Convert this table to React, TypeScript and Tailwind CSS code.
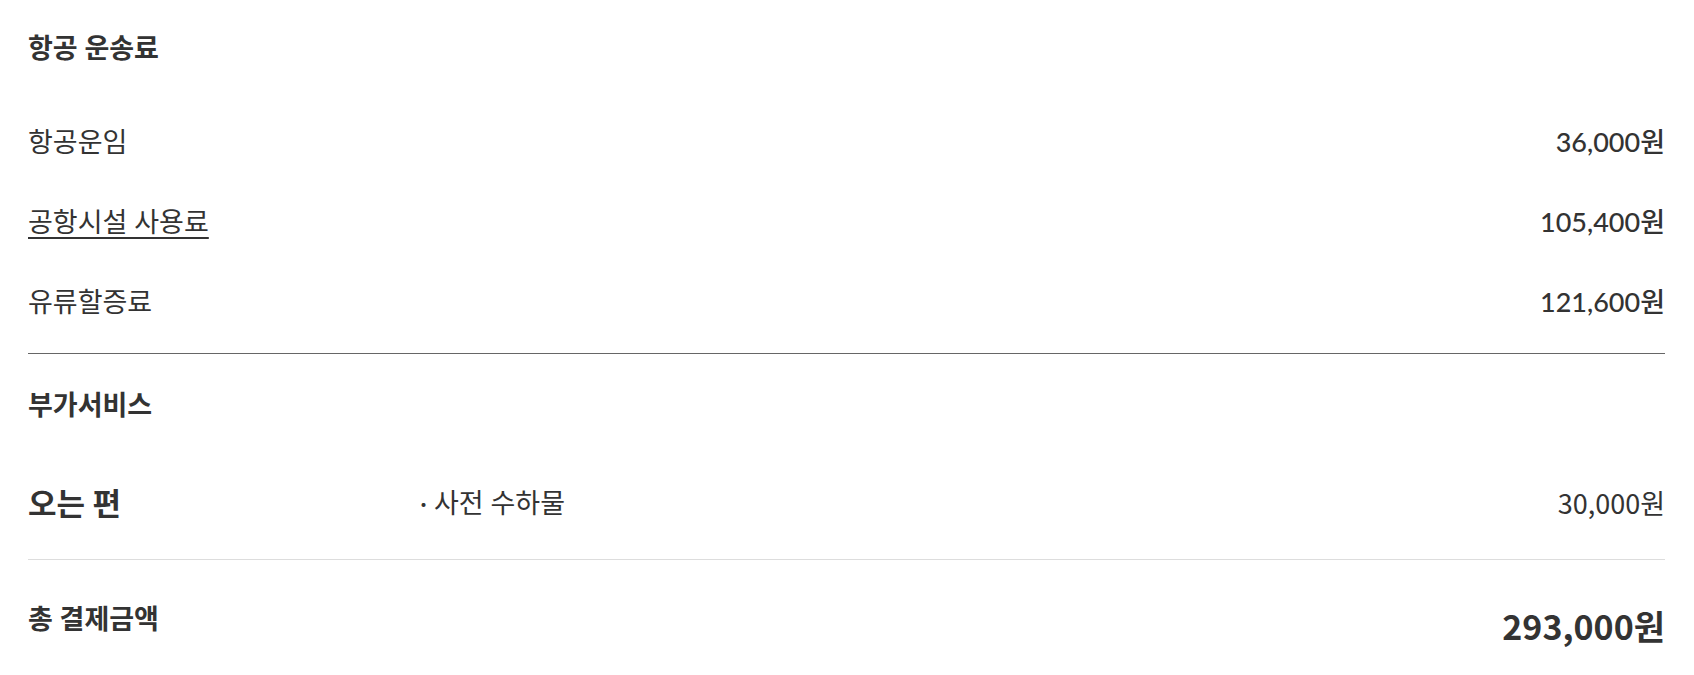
import React from 'react';

const ko = "font-['Lato','Noto_Sans_CJK_KR',sans-serif]";
const cjk = "font-['Noto_Sans_CJK_KR',sans-serif]";

const fareRows = [
    { label: '항공운임', amount: '36,000원', link: false },
    { label: '공항시설 사용료', amount: '105,400원', link: true },
    { label: '유류할증료', amount: '121,600원', link: false },
];

export default function App() {
    return (
        <div className={`w-full h-[675px] overflow-hidden bg-white text-[#333] pl-[28px] pr-[29px] ${ko}`}>
            <div className="h-[96px] flex items-center">
                <h3 className="text-[27px] font-semibold">항공 운송료</h3>
            </div>
            <div className="mt-[6px] mb-[11px]">
                {fareRows.map(row => (
                    <div key={row.label} className="h-[80px] flex items-center justify-between text-[27px]">
                        <span className={row.link ? 'underline underline-offset-[5px] decoration-[2px]' : ''}>{row.label}</span>
                        <span className="font-medium">{row.amount}</span>
                    </div>
                ))}
            </div>
            <div className="border-t border-[#666]" />
            <div className="h-[102px] flex items-center">
                <h3 className="text-[27px] font-semibold">부가서비스</h3>
            </div>
            <div className="h-[94px] mb-[9px] grid grid-cols-[392px_1fr_auto] items-center">
                <span className="text-[31px] font-bold">오는 편</span>
                <span className="text-[27px]">· 사전 수하물</span>
                <span className={`text-[27px] ${cjk}`}>30,000원</span>
            </div>
            <div className="border-t border-[#ddd]" />
            <div className="h-[118px] flex items-center justify-between">
                <h3 className="text-[27px] font-semibold">총 결제금액</h3>
                <span className={`text-[34px] font-bold mt-[12px] ${cjk}`}>293,000원</span>
            </div>
        </div>
    );
}
